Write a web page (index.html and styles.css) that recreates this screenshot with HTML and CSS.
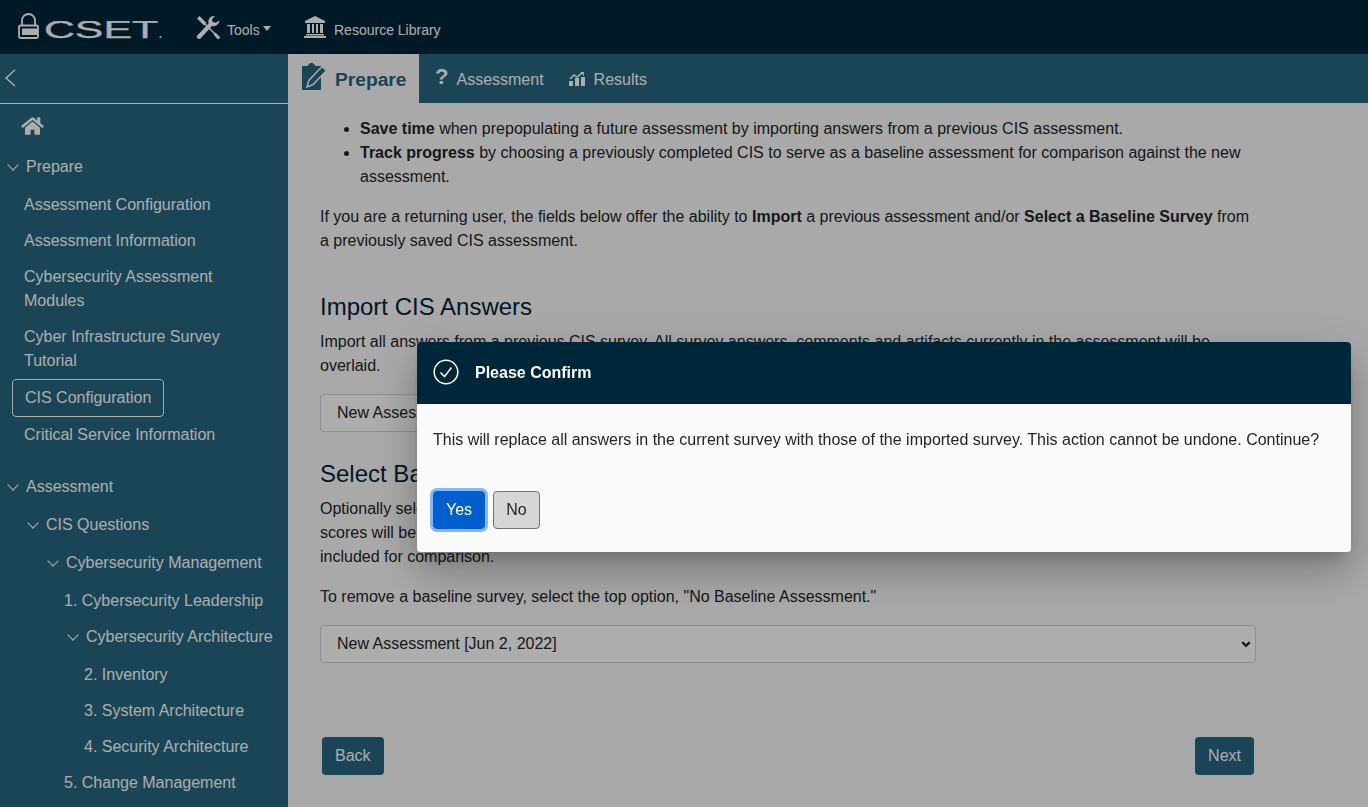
FILE: index.html
```html
<!DOCTYPE html>
<html>
<head>
    <title>CSET</title>
    <link rel="stylesheet" href="styles.css">
</head>
<body>
    <div id="topbar">
        <a class="logo">
            <svg class="logo-lock" viewBox="0 0 22 26" width="22" height="26">
                <path d="M5 12V7.500a6.500 6.500 0 0 1 13 0V12" fill="none" stroke="#fff" stroke-width="1.800"/>
                <rect x="2" y="12.500" width="19" height="12.500" rx="1.500" fill="none" stroke="#fff" stroke-width="1.800"/>
                <rect x="5" y="15.500" width="16" height="6.500" fill="#fff"/>
            </svg>
            <svg class="logo-word" viewBox="0 0 118 18" width="118" height="18">
                <text x="0" y="17" textLength="114" lengthAdjust="spacingAndGlyphs">CSET</text>
                <circle cx="116.500" cy="16" r="1" fill="#fff"/>
            </svg>
        </a>
        <a class="top-link tools">
            <svg viewBox="0 0 24 24" width="24" height="24">
                <path d="M1 3.500 3.500 1 10.500 8 8 10.500z" fill="#fff"/>
                <path d="M9 9 20 20" fill="none" stroke="#fff" stroke-width="1.600"/>
                <path d="M17.500 19.500 19.500 17.500 23.500 21.500a1.600 1.600 0 0 1-2.500 2z" fill="#fff"/>
                <path d="M23.500 5.500a5.800 5.800 0 0 1-7.600 5.400L5 23a2.300 2.300 0 0 1-3.800-2.600L12.600 8.600A5.800 5.800 0 0 1 19 1l-3 3 .7 3 3 .7z" fill="#fff"/>
            </svg>
            <span>Tools</span><i class="caret"></i>
        </a>
        <a class="top-link library">
            <svg viewBox="0 0 22 22" width="22" height="22">
                <path d="M11 0 21 5v2H1V5z" fill="#fff"/>
                <path d="M3 8h3v9H3zM8 8h2v9H8zM12 8h2v9h-2zM16 8h3v9h-3zM2 18h18v1.500H2zM0 20h22v2H0z" fill="#fff"/>
            </svg>
            <span>Resource Library</span>
        </a>
    </div>

    <div id="container">
        <div id="sidebar">
            <div class="side-toggle">
                <svg viewBox="0 0 12 18" width="12" height="18"><path d="M11 1 2 9l9 8" fill="none" stroke="#fff" stroke-width="1.500"/></svg>
            </div>
            <div class="home">
                <svg viewBox="0 0 576 512" width="23" height="20"><path fill="#fff" d="M280.37 148.26L96 300.11V464a16 16 0 0 0 16 16l112.06-.29a16 16 0 0 0 15.92-16V368a16 16 0 0 1 16-16h64a16 16 0 0 1 16 16v95.64a16 16 0 0 0 16 16.05L464 480a16 16 0 0 0 16-16V300L295.67 148.26a12.19 12.19 0 0 0-15.3 0zM571.6 251.47L488 182.56V44.05a12 12 0 0 0-12-12h-56a12 12 0 0 0-12 12v72.61L318.47 43a48 48 0 0 0-61 0L4.34 251.47a12 12 0 0 0-1.6 16.9l25.5 31A12 12 0 0 0 45.15 301l235.22-193.74a12.19 12.19 0 0 1 15.3 0L530.9 301a12 12 0 0 0 16.9-1.6l25.5-31a12 12 0 0 0-1.700-16.93z"/></svg>
            </div>

            <div class="nav-head lvl0"><i class="chev"></i>Prepare</div>
            <div class="nav-list">
                <div class="nav-item lvl1">Assessment Configuration</div>
                <div class="nav-item lvl1">Assessment Information</div>
                <div class="nav-item lvl1">Cybersecurity Assessment<br>Modules</div>
                <div class="nav-item lvl1">Cyber Infrastructure Survey<br>Tutorial</div>
                <div class="nav-item lvl1 active">CIS Configuration</div>
                <div class="nav-item lvl1">Critical Service Information</div>
            </div>

            <div class="nav-head lvl0 next-group"><i class="chev"></i>Assessment</div>
            <div class="nav-head lvl1"><i class="chev"></i>CIS Questions</div>
            <div class="nav-head lvl2"><i class="chev"></i>Cybersecurity Management</div>
            <div class="nav-list">
                <div class="nav-item lvl3">1. Cybersecurity Leadership</div>
            </div>
            <div class="nav-head lvl3 tight"><i class="chev"></i>Cybersecurity Architecture</div>
            <div class="nav-list">
                <div class="nav-item lvl4">2. Inventory</div>
                <div class="nav-item lvl4">3. System Architecture</div>
                <div class="nav-item lvl4">4. Security Architecture</div>
                <div class="nav-item lvl3">5. Change Management</div>
            </div>
        </div>

        <div id="main">
            <div id="tabs">
                <a class="tab current">
                    <svg viewBox="0 0 25 27" width="25" height="27">
                        <path d="M0 3h6V1.500h1.500a2 2 0 0 1 4 0H13V3h6v24H0z" fill="#266680"/>
                        <path d="M20 3.500 24.500 7.500 11 21.500 5 24l1.800-6.500z" fill="#266680" stroke="#fafafa" stroke-width="1.500"/>
                    </svg>
                    Prepare
                </a>
                <a class="tab"><span class="tab-q">?</span>Assessment</a>
                <a class="tab">
                    <svg class="chart" viewBox="0 0 16 14" width="16" height="14">
                        <path d="M0 9h4v5H0zM6 6h4v8H6zM12 5h4v9h-4z" fill="#fff"/>
                        <path d="M1 7l4-4 3 2 5-4" fill="none" stroke="#fff" stroke-width="1.500"/>
                        <path d="M11 0h4v4z" fill="#fff"/>
                    </svg>
                    Results
                </a>
            </div>

            <div id="content">
                <ul>
                    <li><b>Save time</b> when prepopulating a future assessment by importing answers from a previous CIS assessment.</li>
                    <li><b>Track progress</b> by choosing a previously completed CIS to serve as a baseline assessment for comparison against the new assessment.</li>
                </ul>
                <p>If you are a returning user, the fields below offer the ability to <b>Import</b> a previous assessment and/or <b>Select a Baseline Survey</b> from a previously saved CIS assessment.</p>

                <h2 class="first">Import CIS Answers</h2>
                <p>Import all answers from a previous CIS survey. All survey answers, comments and artifacts currently in the assessment will be overlaid.</p>
                <select class="field"><option>New Assessment [Jun 2, 2022]</option></select>

                <h2>Select Baseline Survey</h2>
                <p>Optionally select a previous CIS survey to use as a baseline for this assessment.<br>scores will be shown next to the current scores, and the baseline answers will be<br>included for comparison.</p>
                <p>To remove a baseline survey, select the top option, "No Baseline Assessment."</p>
                <select class="field"><option>New Assessment [Jun 2, 2022]</option></select>

                <div class="nav-buttons">
                    <button class="btn-nav">Back</button>
                    <button class="btn-nav">Next</button>
                </div>
            </div>
        </div>
    </div>

    <div id="backdrop"></div>
    <div id="dialog">
        <div class="dialog-head">
            <svg viewBox="0 0 26 26" width="26" height="26">
                <circle cx="13" cy="13" r="11.800" fill="none" stroke="#fff" stroke-width="1.500"/>
                <path d="M7.500 13.500 11.500 17.500 18.500 8.500" fill="none" stroke="#fff" stroke-width="1.500"/>
            </svg>
            <span>Please Confirm</span>
        </div>
        <div class="dialog-body">This will replace all answers in the current survey with those of the imported survey. This action cannot be undone. Continue?</div>
        <div class="dialog-actions">
            <button class="btn-yes">Yes</button>
            <button class="btn-no">No</button>
        </div>
    </div>
</body>
</html>
```

FILE: styles.css
```css
* {
    box-sizing: border-box;
}

html, body {
    height: 807px;
    margin: 0;
    overflow: hidden;
}

body {
    font-family: "Liberation Sans", Arial, sans-serif;
    font-size: 16px;
    line-height: 24px;
    color: #212529;
    background-color: #fafafa;
}

#topbar {
    display: flex;
    align-items: center;
    height: 54px;
    background-color: #00263a;
    color: #fff;
    font-size: 14px;
}

.logo {
    display: flex;
    flex: none;
    align-items: flex-end;
    width: 162px;
    height: 26px;
    margin: 0 17px 2px 17px;
}

.logo-lock {
    flex: none;
}

.logo-word {
    flex: none;
    margin-left: 5px;
}

.logo-word text {
    font-family: "Liberation Sans", Arial, sans-serif;
    font-size: 23px;
    fill: #fff;
    stroke: #fff;
    stroke-width: 0.3px;
}

.top-link {
    display: flex;
    align-items: center;
}

.tools {
    width: 108px;
}

.tools span {
    margin: 5px 0 0 7px;
}

.library span {
    margin: 5px 0 0 8px;
}

.caret {
    width: 0;
    height: 0;
    margin: 3px 0 0 3px;
    border-top: 5px solid #fff;
    border-left: 4.500px solid transparent;
    border-right: 4.500px solid transparent;
}

#container {
    display: flex;
    height: 753px;
}

#sidebar {
    flex: none;
    width: 288px;
    overflow: hidden;
    background-color: #266680;
    color: #fff;
}

.side-toggle {
    display: flex;
    align-items: center;
    height: 50px;
    padding-left: 4px;
    padding-bottom: 2px;
    border-bottom: 1px solid #fff;
}

.home {
    display: flex;
    align-items: center;
    height: 44px;
    padding-left: 21px;
}

.nav-head {
    display: flex;
    align-items: center;
    padding: 7px 0;
}

.nav-head.next-group {
    margin-top: 15px;
}

.nav-head.tight {
    margin-top: -1px;
}

.chev {
    flex: none;
    width: 8px;
    height: 8px;
    margin: -4px 9px 0 0;
    border-right: 1.700px solid #fff;
    border-bottom: 1.700px solid #fff;
    transform: rotate(45deg);
}

.nav-head.lvl0 { padding-left: 9px; }
.nav-head.lvl1 { padding-left: 29px; }
.nav-head.lvl2 { padding-left: 49px; }
.nav-head.lvl3 { padding-left: 69px; }

.nav-list {
    margin-top: 1px;
}

.nav-item {
    padding: 6px 0;
}

.nav-item.lvl1 { padding-left: 24px; }
.nav-item.lvl3 { padding-left: 64px; }
.nav-item.lvl4 { padding-left: 84px; }

.nav-item.active {
    width: 152px;
    height: 38px;
    margin: 0 0 0 12px;
    padding: 6px 0 6px 12px;
    border: 1px solid #fff;
    border-radius: 4px;
    white-space: nowrap;
}

#main {
    flex: 1;
    min-width: 0;
}

#tabs {
    display: flex;
    height: 49px;
    background-color: #266680;
    color: #fff;
}

.tab {
    display: flex;
    align-items: center;
    padding-top: 2px;
    padding-left: 14px;
    padding-right: 11px;
    gap: 8px;
}

.tab.current {
    width: 131px;
    padding: 3px 0 0 14px;
    gap: 8px;
    background-color: #fafafa;
    color: #266680;
    font-size: 19.200px;
    font-weight: 700;
}

.tab.current svg {
    margin-top: -7px;
}

.tab-q {
    margin: -6px 0 0 2px;
    font-size: 22px;
    font-weight: 700;
}

.tab svg {
    margin-top: -2px;
}

.tab .chart {
    margin-right: 1px;
}

#content {
    width: 1000px;
    padding: 14px 32px 0;
}

ul {
    margin: 0 0 16px;
    padding-left: 40px;
}

p {
    margin: 0 0 16px;
}

h2 {
    margin: 0 0 9px;
    padding-top: 11px;
    font-size: 24px;
    font-weight: 400;
    line-height: 29px;
    color: #00263a;
}

h2.first {
    padding-top: 23px;
}

.field {
    display: block;
    width: 100%;
    height: 38px;
    margin-bottom: 16px;
    padding: 5px 36px 7px 16px;
    border: 1px solid #ced4da;
    border-radius: 4px;
    font-family: inherit;
    font-size: 16px;
    color: #212529;
    background: #fff url("data:image/svg+xml,%3csvg xmlns='http://www.w3.org/2000/svg' viewBox='0 0 16 16'%3e%3cpath fill='none' stroke='%23212529' stroke-width='3.500' d='M2 5l6 6 6-6'/%3e%3c/svg%3e") no-repeat right 4px center / 10px 10px;
    appearance: none;
}

.nav-buttons {
    display: flex;
    justify-content: space-between;
    padding: 58px 2px 0;
}

.btn-nav {
    height: 38px;
    padding: 0 13px;
    border: none;
    border-radius: 4px;
    font-family: inherit;
    font-size: 16px;
    color: #fff;
    background-color: #266680;
}

#backdrop {
    position: fixed;
    top: 0;
    left: 0;
    width: 100%;
    height: 100%;
    background-color: rgba(0, 0, 0, 0.32);
}

#dialog {
    position: fixed;
    top: 342px;
    left: 417px;
    width: 934px;
    height: 210px;
    border-radius: 4px;
    overflow: hidden;
    background-color: #fafafa;
    box-shadow: 0 11px 15px -7px rgba(0, 0, 0, 0.2), 0 24px 38px 3px rgba(0, 0, 0, 0.14), 0 9px 46px 8px rgba(0, 0, 0, 0.12);
}

.dialog-head {
    display: flex;
    align-items: center;
    height: 62px;
    padding-left: 16px;
    gap: 16px;
    font-weight: 700;
    color: #fff;
    background-color: #00263a;
}

.dialog-head svg {
    margin-top: -3px;
}

.dialog-body {
    padding: 24px 16px 0;
}

.dialog-actions {
    display: flex;
    gap: 8px;
    padding: 39px 16px 0;
}

.btn-yes, .btn-no {
    height: 38px;
    border-radius: 4px;
    font-family: inherit;
    font-size: 16px;
}

.btn-yes {
    width: 52px;
    border: 1px solid #005fcc;
    color: #fff;
    background-color: #005fcc;
    box-shadow: 0 0 0 3px #86b7fe;
}

.btn-no {
    width: 47px;
    border: 1px solid #6c757d;
    color: #212529;
    background-color: #d6d6d6;
}
```
